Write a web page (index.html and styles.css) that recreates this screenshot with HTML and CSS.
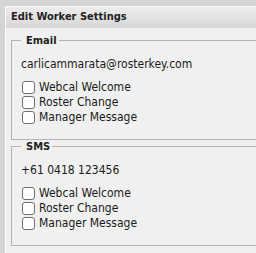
FILE: index.html
```html
<!DOCTYPE html>
<html lang="en">
<head>
    <meta charset="UTF-8">
    <title>Edit Worker Settings</title>
    <link rel="stylesheet" href="styles.css">
</head>
<body>
<div class="panel">
    <div class="panel-header">Edit Worker Settings</div>
    <div class="panel-body">
        <fieldset class="group">
            <legend>Email</legend>
            <div class="address">carlicammarata@rosterkey.com</div>
            <div class="options">
                <label class="option"><input type="checkbox"> Webcal Welcome</label>
                <label class="option"><input type="checkbox"> Roster Change</label>
                <label class="option"><input type="checkbox"> Manager Message</label>
            </div>
        </fieldset>
        <fieldset class="group">
            <legend>SMS</legend>
            <div class="address">+61 0418 123456</div>
            <div class="options">
                <label class="option"><input type="checkbox"> Webcal Welcome</label>
                <label class="option"><input type="checkbox"> Roster Change</label>
                <label class="option"><input type="checkbox"> Manager Message</label>
            </div>
        </fieldset>
    </div>
</div>
</body>
</html>
```

FILE: styles.css
```css
* {
    box-sizing: border-box;
}
html, body {
    height: 100%;
}
body {
    margin: 0;
    padding: 6px 0 0 5px;
    background: #d4d4d4;
    overflow: hidden;
    font-family: "DejaVu Sans Condensed", "DejaVu Sans", sans-serif;
    font-stretch: condensed;
    font-size: 12px;
    color: #1a1a1a;
}
.panel {
    display: flex;
    flex-direction: column;
    height: 100%;
    background: #f0f0f0;
    border-top: 1px solid #fafafa;
    border-left: 1px solid #fafafa;
}
.panel-header {
    height: 21px;
    line-height: 20px;
    padding-left: 5px;
    font-size: 11px;
    font-weight: bold;
    color: #222;
    background: linear-gradient(#ececec, #d7d7d7);
}
.panel-body {
    display: flex;
    flex-direction: column;
    padding: 6px 0 0 5px;
}
.group {
    margin: 0;
    min-width: 0;
    height: 106px;
    padding: 0 0 0 9px;
    border: 1px solid #b4b4b4;
    border-right: none;
}
.group legend {
    padding: 0 2px 0 5px;
    line-height: 13px;
    font-size: 11px;
    font-weight: bold;
    color: #222;
}
.address {
    margin-top: 10px;
    line-height: 15px;
}
.options {
    display: grid;
    grid-template-rows: 16px 15px 15px;
    margin-top: 7px;
}
.option {
    display: flex;
    align-items: center;
    gap: 4px;
    line-height: 15px;
}
.option input {
    appearance: none;
    width: 13px;
    height: 13px;
    margin: 0 0 0 1px;
    border: 1px solid #6f6f6f;
    border-radius: 3px;
    background: #fff;
}
```
